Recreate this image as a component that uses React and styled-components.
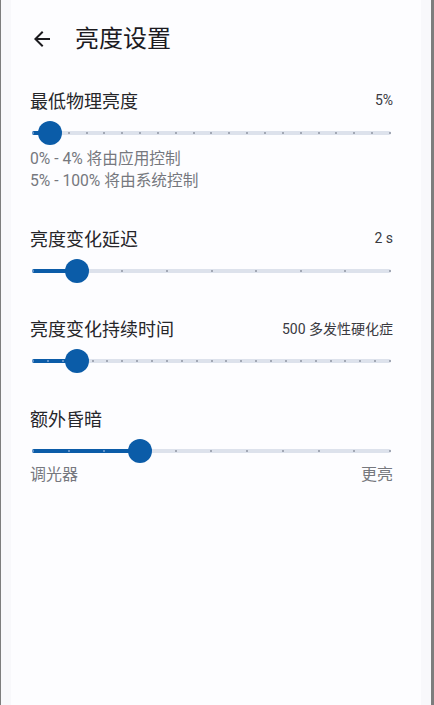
import React from "react";
import styled, { createGlobalStyle } from "styled-components";

const GlobalStyle = createGlobalStyle`
  html, body {
    margin: 0;
    padding: 0;
    background: #f7f7fa;
  }
  body {
    font-family: Roboto, "Noto Sans CJK SC", "Noto Sans", sans-serif;
    -webkit-font-smoothing: antialiased;
  }
`;

const Frame = styled.div`
  box-sizing: border-box;
  height: 705px;
  border-left: 1px solid #7d7d7d;
  border-right: 3px solid #7d7d7d;
  background: #f8f8fb;
  padding: 0 10px;
`;

const Panel = styled.div`
  height: 100%;
  background: #fdfdff;
  padding: 0 28px 0 19px;
`;

const Header = styled.header`
  height: 78px;
  display: flex;
  align-items: center;
  gap: 21px;
`;

const BackButton = styled.button`
  width: 24px;
  height: 24px;
  padding: 0;
  border: none;
  background: transparent;
  color: #1c1b1f;
  display: flex;
  align-items: center;
  justify-content: center;
  cursor: pointer;
`;

const Title = styled.h1`
  margin: 0;
  font-size: 24px;
  font-weight: 400;
  color: #1c1b1f;
  line-height: 30px;
`;

const Sections = styled.div`
  padding-top: 10px;
  display: flex;
  flex-direction: column;
  gap: 30px;
`;

const Section = styled.section`
  display: flex;
  flex-direction: column;
`;

const SectionHead = styled.div`
  display: flex;
  justify-content: space-between;
  align-items: center;
  height: 24px;
`;

const SectionTitle = styled.h2`
  margin: 0;
  font-size: 18px;
  font-weight: 400;
  color: #26262a;
`;

const Value = styled.span`
  font-size: 14px;
  color: #3a3a3f;
`;

const SliderBox = styled.div`
  position: relative;
  height: 30px;
  margin: 6px 2px 0 2px;
  display: flex;
  align-items: center;
`;

const Track = styled.div`
  position: relative;
  width: 100%;
  height: 4px;
  border-radius: 2px;
  background: #dde2ec;
`;

const ActiveTrack = styled.div`
  position: absolute;
  left: 0;
  top: 0;
  height: 4px;
  border-radius: 2px;
  background: #0b5ca8;
`;

const Ticks = styled.div`
  position: absolute;
  inset: 0;
  display: flex;
  justify-content: space-between;
  align-items: center;
`;

const Tick = styled.span`
  width: 2px;
  height: 2px;
  border-radius: 50%;
  background: ${(p) => (p.$on ? "#7fa6d4" : "#8e95a3")};
`;

const Thumb = styled.div`
  position: absolute;
  top: 50%;
  width: 24px;
  height: 24px;
  margin: -12px 0 0 -12px;
  border-radius: 50%;
  background: #0b5ca8;
`;

const Help = styled.div`
  font-size: 15.7px;
  line-height: 22px;
  color: #76787e;
  padding-bottom: 4px;
`;

const EndLabels = styled.div`
  display: flex;
  justify-content: space-between;
  font-size: 16px;
  line-height: 22px;
  color: #76787e;
  margin-top: -2px;
`;

function Slider({ steps, value }) {
  const frac = value / steps;
  const ticks = Array.from({ length: steps + 1 }, (_, i) => i);
  return (
    <SliderBox>
      <Track>
        <ActiveTrack style={{ width: `${frac * 100}%` }} />
        <Ticks>
          {ticks.map((i) => (
            <Tick key={i} $on={i <= value} />
          ))}
        </Ticks>
        <Thumb style={{ left: `${frac * 100}%` }} />
      </Track>
    </SliderBox>
  );
}

export default function App() {
  return (
    <>
      <GlobalStyle />
      <Frame>
        <Panel>
          <Header>
            <BackButton aria-label="返回">
              <svg width="24" height="24" viewBox="0 0 24 24" fill="currentColor">
                <path d="M20 11H7.83l5.59-5.59L12 4l-8 8 8 8 1.41-1.41L7.83 13H20v-2z" />
              </svg>
            </BackButton>
            <Title>亮度设置</Title>
          </Header>
          <Sections>
            <Section>
              <SectionHead>
                <SectionTitle>最低物理亮度</SectionTitle>
                <Value>5%</Value>
              </SectionHead>
              <Slider steps={20} value={1} />
              <Help>
                0% - 4% 将由应用控制
                <br />
                5% - 100% 将由系统控制
              </Help>
            </Section>
            <Section>
              <SectionHead>
                <SectionTitle>亮度变化延迟</SectionTitle>
                <Value>2 s</Value>
              </SectionHead>
              <Slider steps={8} value={1} />
            </Section>
            <Section>
              <SectionHead>
                <SectionTitle>亮度变化持续时间</SectionTitle>
                <Value>500 多发性硬化症</Value>
              </SectionHead>
              <Slider steps={24} value={3} />
            </Section>
            <Section>
              <SectionHead>
                <SectionTitle>额外昏暗</SectionTitle>
              </SectionHead>
              <Slider steps={10} value={3} />
              <EndLabels>
                <span>调光器</span>
                <span>更亮</span>
              </EndLabels>
            </Section>
          </Sections>
        </Panel>
      </Frame>
    </>
  );
}
